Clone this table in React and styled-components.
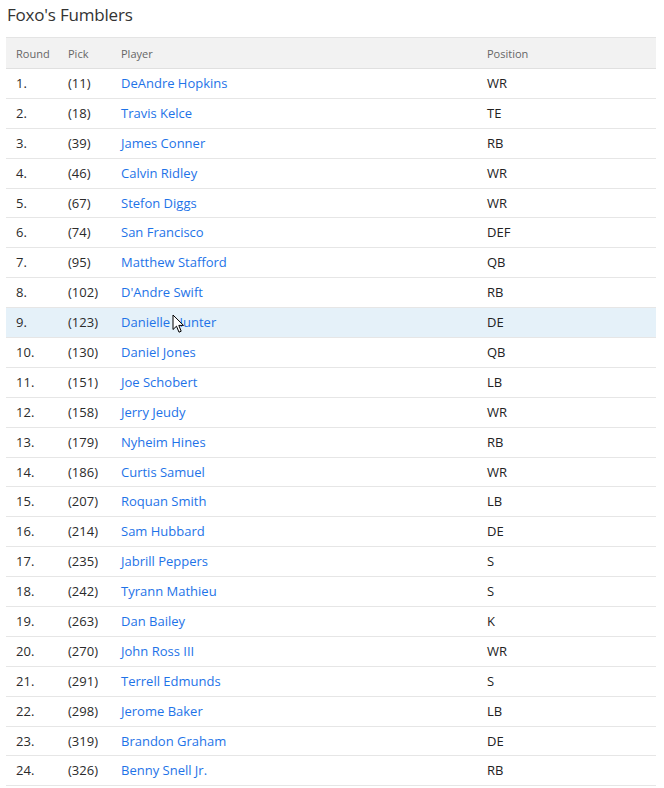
import React from 'react';
import styled, { createGlobalStyle } from 'styled-components';

const GlobalStyle = createGlobalStyle`
  *, *::before, *::after {
    box-sizing: border-box;
  }
  html, body {
    margin: 0;
    padding: 0;
    background: #fff;
    overflow: hidden;
  }
  body {
    font-family: "Open Sans", "Noto Sans", sans-serif;
    color: #333;
  }
`;

const Page = styled.div`
  padding: 2px 8px 0 6px;
  width: 664px;
`;

const Title = styled.h2`
  margin: 0 0 9px 1px;
  font-size: 17px;
  font-weight: 400;
  color: #333;
  line-height: 26px;
  letter-spacing: -0.2px;
`;

const Table = styled.table`
  width: 650px;
  border-collapse: collapse;
  table-layout: fixed;
`;

const HeadCell = styled.th`
  background: #f2f2f2;
  border-top: 1px solid #e4e4e4;
  border-bottom: 1px solid #e0e0e0;
  height: 31px;
  padding: 0 10px;
  text-align: left;
  font-size: 11px;
  font-weight: 400;
  color: #666;
  width: ${(p) => p.$w}px;
`;

const Row = styled.tr`
  background: ${(p) => (p.$hover ? '#e5f1f9' : '#fff')};
`;

const Cell = styled.td`
  height: 29.9px;
  padding: 0 10px 1px;
  border-bottom: 1px solid #e6e6e6;
  font-size: 13px;
  color: #2b2b2b;
  white-space: nowrap;
`;

const PosCell = styled(Cell)`
  font-weight: 500;
  color: #222;
`;

const PlayerLink = styled.a`
  color: #1e73e8;
  text-decoration: none;
  position: relative;
`;

const Cursor = styled.svg`
  position: absolute;
  left: 51px;
  top: 1px;
  pointer-events: none;
`;

const picks = [
  [11, 'DeAndre Hopkins', 'WR'],
  [18, 'Travis Kelce', 'TE'],
  [39, 'James Conner', 'RB'],
  [46, 'Calvin Ridley', 'WR'],
  [67, 'Stefon Diggs', 'WR'],
  [74, 'San Francisco', 'DEF'],
  [95, 'Matthew Stafford', 'QB'],
  [102, "D'Andre Swift", 'RB'],
  [123, 'Danielle Hunter', 'DE'],
  [130, 'Daniel Jones', 'QB'],
  [151, 'Joe Schobert', 'LB'],
  [158, 'Jerry Jeudy', 'WR'],
  [179, 'Nyheim Hines', 'RB'],
  [186, 'Curtis Samuel', 'WR'],
  [207, 'Roquan Smith', 'LB'],
  [214, 'Sam Hubbard', 'DE'],
  [235, 'Jabrill Peppers', 'S'],
  [242, 'Tyrann Mathieu', 'S'],
  [263, 'Dan Bailey', 'K'],
  [270, 'John Ross III', 'WR'],
  [291, 'Terrell Edmunds', 'S'],
  [298, 'Jerome Baker', 'LB'],
  [319, 'Brandon Graham', 'DE'],
  [326, 'Benny Snell Jr.', 'RB'],
];

const App = () => {
  return (
    <Page>
      <GlobalStyle />
      <Title>Foxo's Fumblers</Title>
      <Table>
        <thead>
          <tr>
            <HeadCell $w={52}>Round</HeadCell>
            <HeadCell $w={53}>Pick</HeadCell>
            <HeadCell $w={366}>Player</HeadCell>
            <HeadCell $w={179}>Position</HeadCell>
          </tr>
        </thead>
        <tbody>
          {picks.map(([pick, name, pos], i) => (
            <Row key={pick} $hover={i === 8}>
              <Cell>{i + 1}.</Cell>
              <Cell>({pick})</Cell>
              <Cell>
                <PlayerLink href="#">
                  {name}
                  {i === 8 && (
                    <Cursor width="13" height="20" viewBox="0 0 13 20">
                      <path
                        d="M1 1 L1 15.5 L4.5 12.2 L7 18.2 L9.2 17.2 L6.8 11.4 L11.5 11.4 Z"
                        fill="#fff"
                        stroke="#000"
                        strokeWidth="1"
                        strokeLinejoin="round"
                      />
                    </Cursor>
                  )}
                </PlayerLink>
              </Cell>
              <PosCell>{pos}</PosCell>
            </Row>
          ))}
        </tbody>
      </Table>
    </Page>
  );
};

export default App;
